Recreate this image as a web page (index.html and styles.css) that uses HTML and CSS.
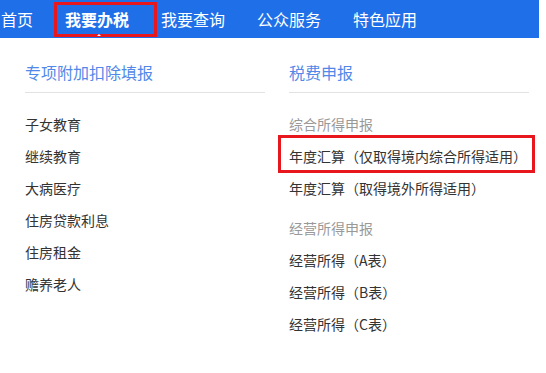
FILE: index.html
```html
<!DOCTYPE html>
<html>
<head>
  <meta charset="UTF-8">
  <title>我要办税</title>
  <link rel="stylesheet" href="styles.css">
</head>
<body>
  <div class="nav">
    <div class="nav-item">首页</div>
    <div class="nav-item active">我要办税</div>
    <div class="nav-item">我要查询</div>
    <div class="nav-item">公众服务</div>
    <div class="nav-item">特色应用</div>
  </div>

  <div class="panel">
    <div class="column">
      <div class="column-title">专项附加扣除填报</div>
      <ul class="menu">
        <li>子女教育</li>
        <li>继续教育</li>
        <li>大病医疗</li>
        <li>住房贷款利息</li>
        <li>住房租金</li>
        <li>赡养老人</li>
      </ul>
    </div>
    <div class="column">
      <div class="column-title">税费申报</div>
      <ul class="menu">
        <li class="group">综合所得申报</li>
        <li class="marked">年度汇算<span class="p">（</span>仅取得境内综合所得适用<span class="p">）</span></li>
        <li>年度汇算<span class="p">（</span>取得境外所得适用<span class="p">）</span></li>
        <li class="group spaced">经营所得申报</li>
        <li>经营所得<span class="p">（</span>A表<span class="p">）</span></li>
        <li>经营所得<span class="p">（</span>B表<span class="p">）</span></li>
        <li>经营所得<span class="p">（</span>C表<span class="p">）</span></li>
      </ul>
    </div>
  </div>
</body>
</html>
```

FILE: styles.css
```css
body {
  margin: 0;
  font-family: "Noto Sans CJK SC", "Liberation Sans", sans-serif;
  background-color: #fff;
}
.nav {
  width: 539px;
  height: 38px;
  background-color: #1f6fe8;
  display: flex;
  align-items: center;
  gap: 32px;
  padding-left: 1px;
  box-sizing: border-box;
  color: #fff;
  font-size: 16px;
}
.nav-item {
  position: relative;
  line-height: 38px;
}
.nav-item.active {
  font-weight: bold;
}
/* 标注红框 */
.nav-item.active::before {
  content: "";
  position: absolute;
  left: -11px;
  top: 2px;
  width: 97px;
  height: 29px;
  border: 3px solid #e8161d;
}
/* 下拉小三角 */
.nav-item.active::after {
  content: "";
  position: absolute;
  left: 32px;
  bottom: 2px;
  border: 2px solid transparent;
  border-bottom-color: #fff;
}
.panel {
  display: grid;
  grid-template-columns: 240px 240px;
  gap: 24px;
  padding: 24px 0 0 25px;
  height: 335px;
  box-sizing: border-box;
  border-left: 1px solid #eef0f3;
  margin-left: -1px;
}
.column-title {
  font-size: 16px;
  line-height: 20px;
  color: #5289e8;
  padding-bottom: 10px;
  border-bottom: 1px solid #e2e2e2;
}
.menu {
  list-style: none;
  margin: 15px 0 0;
  padding: 0;
}
.menu li {
  font-size: 14px;
  line-height: 32px;
  color: #333;
  white-space: nowrap;
}
/* 全角括号，居中占一个字宽 */
.menu .p {
  display: inline-block;
  width: 14px;
  text-align: center;
}
.menu li.group {
  color: #999;
}
.menu li.spaced {
  margin-top: 8px;
}
.menu li.marked {
  position: relative;
}
.menu li.marked::before {
  content: "";
  position: absolute;
  left: -11px;
  top: -5px;
  width: 251px;
  height: 32px;
  border: 3px solid #e8161d;
}
```
